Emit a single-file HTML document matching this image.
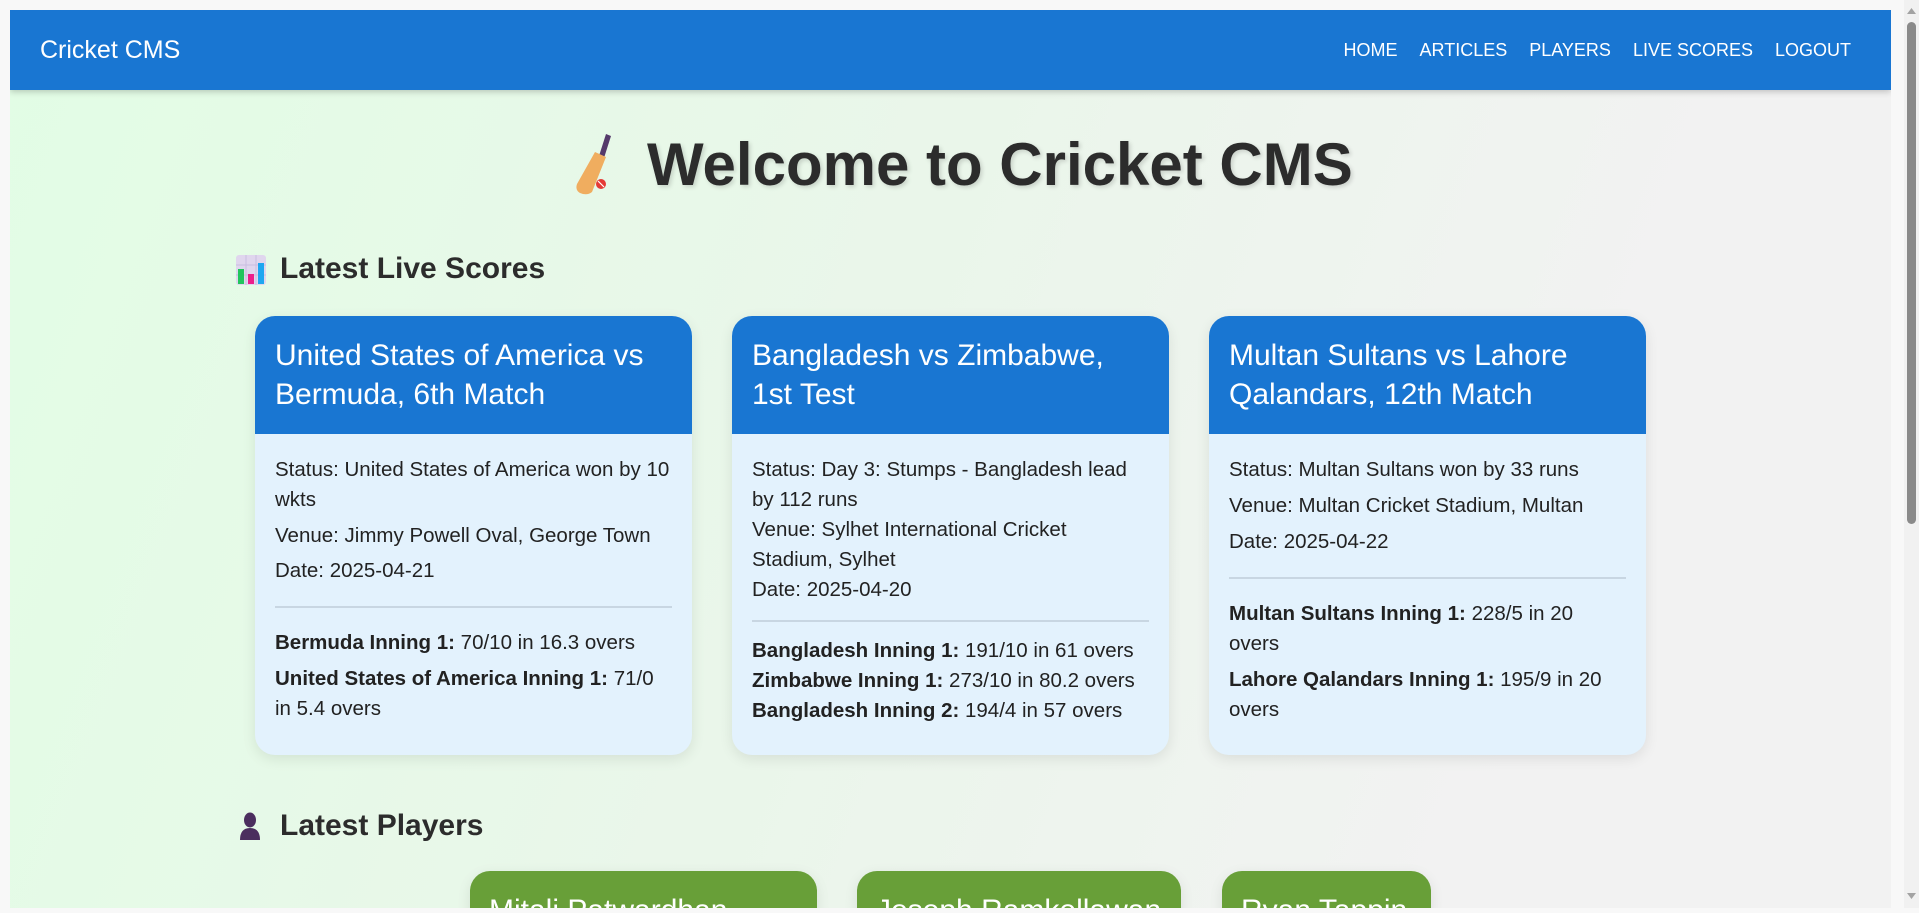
<!DOCTYPE html>
<html><head><meta charset="utf-8">
<style>
*{box-sizing:border-box;margin:0;padding:0}
html,body{width:1919px;height:908px;overflow:hidden;background:#f8f8f8;font-family:"Liberation Sans",Arial,sans-serif}
#page{position:absolute;left:10px;top:10px;width:1881px;height:898px;overflow:hidden;background:linear-gradient(110deg,#e2fde5 0%,#eaf6ea 45%,#f2f2f2 80%,#f2f2f2 100%)}
#nav{position:absolute;left:0;top:0;width:1881px;height:80px;background:#1976d2;box-shadow:0 2px 6px rgba(0,0,0,.2)}
#brand{position:absolute;left:30px;top:0;line-height:80px;color:#fff;font-size:25px}
#links{position:absolute;right:40px;top:0;line-height:80px;color:#fff;font-size:18px;display:flex;gap:22px}
h1{position:absolute;left:637px;top:120px;font-size:60px;line-height:69px;color:#2c2c2c;font-weight:bold;text-shadow:2px 2px 4px rgba(0,0,0,.15);white-space:nowrap}
.h2{position:absolute;left:270px;font-size:30px;line-height:32px;font-weight:bold;color:#2c2c2c;white-space:nowrap}
.card{position:absolute;top:306px;width:437px;height:439px;border-radius:20px;background:#e3f2fd;box-shadow:0 4px 14px rgba(0,0,0,.09);overflow:hidden;color:#222;font-size:20.5px;line-height:30px}
.ch{background:#1976d2;color:#fff;font-size:30px;line-height:39px;padding:20px 20px 20px 20px;height:118px}
.cb{padding:21px 20px 0 20px}
.hr{height:2px;background:#c8d6e2;margin:0}
.pc{position:absolute;top:861px;height:60px;border-radius:20px;background:#689f38;color:#fff;font-size:30px;line-height:39px;padding:20px 19px;box-shadow:0 4px 14px rgba(0,0,0,.09);white-space:nowrap;overflow:hidden}
#sb{position:absolute;left:1904px;top:0;width:15px;height:908px;background:#f1f1f1}
</style></head><body>
<div id="page">
 <div id="nav"><div id="brand">Cricket CMS</div>
  <div id="links"><span>HOME</span><span>ARTICLES</span><span>PLAYERS</span><span>LIVE SCORES</span><span>LOGOUT</span></div></div>
 <svg style="position:absolute;left:558px;top:122px" width="50" height="64" viewBox="0 0 50 64">
  <path d="M38 2 L43 4 L36 26 L31 24 Z" fill="#553a6b"/>
  <path d="M27 20 L38 25 L24 60 Q19 64 12 61 Q7 58 9 52 Z" fill="#f0ad5f"/>
  <circle cx="33" cy="52" r="5" fill="#e53935"/><path d="M30 49 L36 55" stroke="#fff" stroke-width="1.2"/>
 </svg>
 <h1>Welcome to Cricket CMS</h1>
 <svg style="position:absolute;left:226px;top:245px" width="30" height="30" viewBox="0 0 30 30">
  <rect x="0" y="0" width="30" height="30" rx="3" fill="#e0d6ee"/>
  <path d="M0 10H30M0 20H30M10 0V30M20 0V30" stroke="#c9bde0" stroke-width="1"/>
  <rect x="2" y="14" width="6" height="15" fill="#21c55d"/><rect x="12" y="19" width="6" height="10" fill="#ec1e8b"/><rect x="22" y="8" width="6" height="21" fill="#1ea7f0"/>
 </svg>
 <div class="h2" style="top:243px">Latest Live Scores</div>

 <div class="card" style="left:245px">
  <div class="ch">United States of America vs Bermuda, 6th Match</div>
  <div class="cb">
   <div>Status: United States of America won by 10 wkts</div>
   <div style="margin-top:6px">Venue: Jimmy Powell Oval, George Town</div>
   <div style="margin-top:5px">Date: 2025-04-21</div>
   <div class="hr" style="margin-top:20px"></div>
   <div style="margin-top:20px"><b>Bermuda Inning 1:</b> 70/10 in 16.3 overs</div>
   <div style="margin-top:6px"><b>United States of America Inning 1:</b> 71/0 in 5.4 overs</div>
  </div></div>

 <div class="card" style="left:722px">
  <div class="ch">Bangladesh vs Zimbabwe, 1st Test</div>
  <div class="cb">
   <div>Status: Day 3: Stumps - Bangladesh lead<br>by 112 runs</div>
   <div>Venue: Sylhet International Cricket<br>Stadium, Sylhet</div>
   <div>Date: 2025-04-20</div>
   <div class="hr" style="margin-top:15px"></div>
   <div style="margin-top:14px"><b>Bangladesh Inning 1:</b> 191/10 in 61 overs</div>
   <div><b>Zimbabwe Inning 1:</b> 273/10 in 80.2 overs</div>
   <div><b>Bangladesh Inning 2:</b> 194/4 in 57 overs</div>
  </div></div>

 <div class="card" style="left:1199px">
  <div class="ch">Multan Sultans vs Lahore Qalandars, 12th Match</div>
  <div class="cb">
   <div>Status: Multan Sultans won by 33 runs</div>
   <div style="margin-top:6px">Venue: Multan Cricket Stadium, Multan</div>
   <div style="margin-top:6px">Date: 2025-04-22</div>
   <div class="hr" style="margin-top:20px"></div>
   <div style="margin-top:20px"><b>Multan Sultans Inning 1:</b> 228/5 in 20<br>overs</div>
   <div style="margin-top:6px"><b>Lahore Qalandars Inning 1:</b> 195/9 in 20<br>overs</div>
  </div></div>

 <svg style="position:absolute;left:226px;top:802px" width="28" height="28" viewBox="0 0 28 28">
  <ellipse cx="14" cy="8" rx="6" ry="7.5" fill="#4b2e5e"/>
  <path d="M4 28 Q4 16 14 16 Q24 16 24 28 Z" fill="#4b2e5e"/>
 </svg>
 <div class="h2" style="top:800px">Latest Players</div>

 <div class="pc" style="left:460px;width:347px">Mitali Patwardhan</div>
 <div class="pc" style="left:847px;width:324px">Joseph Ramkellawan</div>
 <div class="pc" style="left:1212px;width:209px">Ryan Tappin</div>
</div>
<div id="sb">
 <svg width="15" height="908" viewBox="0 0 15 908">
  <path d="M3 14 L7.5 8 L12 14 Z" fill="#a3a3a3"/>
  <rect x="3" y="22" width="9" height="502" rx="4.5" fill="#8a8a8a"/>
  <path d="M3 893 L7.5 899 L12 893 Z" fill="#a3a3a3"/>
 </svg>
</div>
</body></html>
